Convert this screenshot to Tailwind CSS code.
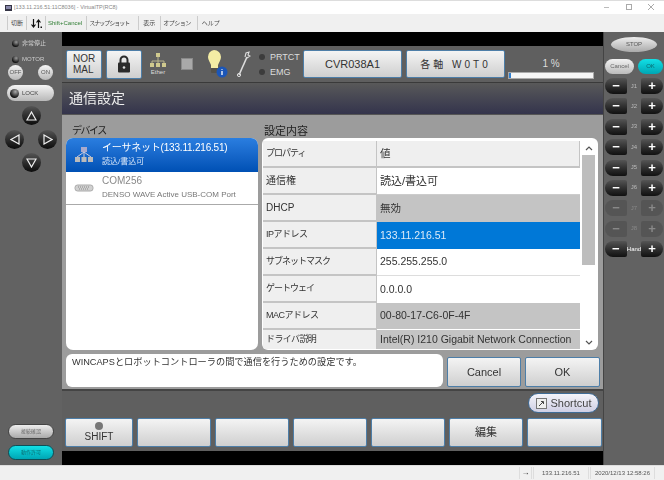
<!DOCTYPE html>
<html lang="ja">
<head>
<meta charset="UTF-8">
<title>VirtualTP</title>
<script src="https://cdn.jsdelivr.net/npm/@tailwindcss/browser@4"></script>
</head>
<body class="w-[664px] h-[480px] overflow-hidden bg-white font-['Liberation_Sans','Noto_Sans_CJK_JP',sans-serif] text-[#333]">
<div class="flex flex-col h-[480px] blur-[0.35px]">

  <!-- title bar -->
  <div class="h-[14px] bg-white flex items-center pl-[5px] border-t border-[#ddd]">
    <svg width="7" height="6" viewBox="0 0 7 6"><rect width="7" height="6" fill="#334"/><rect x="1" y="1" width="5" height="3" fill="#88a"/></svg>
    <span class="ml-[2px] text-[5.5px] text-[#888] whitespace-nowrap">[133.11.216.51:11C8036] - VirtualTP(RC8)</span>
    <div class="ml-auto flex items-center gap-[13px] pr-[8px] text-[#aaa]">
      <svg width="9" height="9" viewBox="0 0 9 9"><path d="M1 4.5h5" stroke="#bbb" fill="none"/></svg>
      <svg width="9" height="9" viewBox="0 0 9 9"><rect x="1.5" y="1.5" width="5" height="5" stroke="#aaa" fill="none"/></svg>
      <svg width="9" height="9" viewBox="0 0 9 9"><path d="M1 1l6 6M7 1l-6 6" stroke="#aaa" fill="none"/></svg>
    </div>
  </div>

  <!-- menu -->
  <div class="h-[18px] bg-[#f0f0f0] flex items-center text-[6px] whitespace-nowrap text-[#444]">
    <span class="w-[4px] h-[14px] ml-[4px] border-r border-[#ccc]"></span>
    <span class="ml-[3px]">切断</span>
    <span class="w-px h-[14px] bg-[#ccc] ml-[3px]"></span>
    <svg class="ml-[4px]" width="11" height="9" viewBox="0 0 11 9"><path d="M2.5 0v8M0.5 5.5l2 2.5 2-2.5M7.5 9V1M5.5 3.5l2-2.5 2 2.5" stroke="#111" stroke-width="1.2" fill="none"/><rect x="9.5" y="7.5" width="1.5" height="1.5" fill="#111"/></svg>
    <span class="w-px h-[14px] bg-[#ccc] ml-[3px]"></span>
    <span class="ml-[2px] text-[#2e7d32]">Shift+Cancel</span>
    <span class="w-px h-[14px] bg-[#ccc] ml-[4px]"></span>
    <span class="ml-[2px] tracking-[-1px]">スナップショット</span>
    <span class="w-px h-[14px] bg-[#ccc] ml-[9px]"></span>
    <span class="ml-[4px]">表示</span>
    <span class="w-px h-[14px] bg-[#ccc] ml-[5px]"></span>
    <span class="ml-[2px] tracking-[-0.5px]">オプション</span>
    <span class="w-px h-[14px] bg-[#ccc] ml-[6px]"></span>
    <span class="ml-[4px]">ヘルプ</span>
  </div>

  <div class="flex h-[433px]">
    <!-- left panel -->
    <div class="w-[62px] bg-[#626262] flex flex-col text-[6px] text-[#ccc]">
      <div class="flex items-center mt-[8px] ml-[12px] gap-[3px] h-[7px]"><span class="w-[7px] h-[7px] rounded-full bg-[radial-gradient(circle_at_60%_30%,#999,#111_70%)]"></span>非常停止</div>
      <div class="flex items-center mt-[9px] ml-[12px] gap-[3px] h-[7px]"><span class="w-[7px] h-[7px] rounded-full bg-[radial-gradient(circle_at_60%_30%,#999,#111_70%)]"></span>MOTOR</div>
      <div class="flex justify-between ml-[8px] mr-[9px] mt-[2px] text-[#555]">
        <span class="w-[15px] h-[15px] rounded-full bg-gradient-to-b from-[#f5f5f5] to-[#b8b8b8] flex items-center justify-center">OFF</span>
        <span class="w-[15px] h-[15px] rounded-full bg-gradient-to-b from-[#f5f5f5] to-[#b8b8b8] flex items-center justify-center">ON</span>
      </div>
      <div class="ml-[7px] w-[47px] h-[16px] mt-[5px] rounded-[8px] bg-gradient-to-b from-[#f5f5f5] to-[#b8b8b8] flex items-center pl-[3px] gap-[3px] text-[#444]"><span class="w-[9px] h-[9px] rounded-full bg-[radial-gradient(circle_at_60%_30%,#aaa,#111_70%)]"></span>LOCK</div>

      <div class="grid grid-cols-[17px_16px_19px] grid-rows-[24px_23px_19px] ml-[5px] mt-[5px]">
        <span></span>
        <span class="w-[19px] h-[19px] rounded-full bg-gradient-to-b from-[#555] to-[#0c0c0c] flex items-center justify-center"><svg width="11" height="10" viewBox="0 0 11 10"><path d="M5.5 1L10 9H1Z" fill="none" stroke="#eee" stroke-width="1.2"/></svg></span>
        <span></span>
        <span class="w-[19px] h-[19px] rounded-full bg-gradient-to-b from-[#555] to-[#0c0c0c] flex items-center justify-center"><svg width="10" height="11" viewBox="0 0 10 11"><path d="M1 5.5L9 1V10Z" fill="none" stroke="#eee" stroke-width="1.2"/></svg></span>
        <span></span>
        <span class="w-[19px] h-[19px] rounded-full bg-gradient-to-b from-[#555] to-[#0c0c0c] flex items-center justify-center"><svg width="10" height="11" viewBox="0 0 10 11"><path d="M9 5.5L1 1V10Z" fill="none" stroke="#eee" stroke-width="1.2"/></svg></span>
        <span></span>
        <span class="w-[19px] h-[19px] rounded-full bg-gradient-to-b from-[#555] to-[#0c0c0c] flex items-center justify-center"><svg width="11" height="10" viewBox="0 0 11 10"><path d="M5.5 9L10 1H1Z" fill="none" stroke="#eee" stroke-width="1.2"/></svg></span>
        <span></span>
      </div>

      <div class="mt-auto ml-[8px] w-[46px] h-[15px] rounded-[8px] bg-gradient-to-b from-[#eee] to-[#aaa] border border-[#444] flex items-center justify-center text-[#666] text-[5px]">接続確認</div>
      <div class="ml-[8px] w-[46px] h-[15px] mt-[6px] mb-[5px] rounded-[8px] bg-gradient-to-b from-[#12e0e6] to-[#00a6b4] border border-[#0b5058] flex items-center justify-center text-[#0a6a70] text-[5px]">動作許可</div>
    </div>

    <!-- center -->
    <div class="w-[541px] flex flex-col">
      <div class="h-[14px] bg-black"></div>

      <!-- top status bar -->
      <div class="h-[37px] bg-[#5f5f5f] border-b border-[#3a3a3a] flex items-center pl-[4px] relative">
        <div class="w-[36px] h-[29px] rounded-[2px] border border-[#4d7ea8] bg-gradient-to-b from-[#f4f4f4] to-[#cfcfcf] text-[10px] leading-[11px] text-[#333] pl-[6px] flex flex-col justify-center"><span>NOR</span><span>MAL</span></div>
        <div class="ml-[4px] w-[36px] h-[29px] rounded-[2px] border border-[#4d7ea8] bg-gradient-to-b from-[#f4f4f4] to-[#cfcfcf] flex items-center justify-center">
          <svg width="14" height="18" viewBox="0 0 14 18"><path d="M3.5 8V5a3.5 3.5 0 0 1 7 0v3" fill="none" stroke="#2b2b2b" stroke-width="2"/><rect x="1" y="7.5" width="12" height="10" rx="1" fill="#2b2b2b"/><circle cx="7" cy="12.5" r="1.3" fill="#ddd"/></svg>
        </div>
        <div class="ml-[7px] w-[18px] flex flex-col items-center text-[6px] leading-[6px] text-[#ddd]">
          <svg width="18" height="15" viewBox="0 0 18 15"><path d="M9 3v5M3 11V8h12v3M9 8v3" stroke="#b9b58f" fill="none"/><rect x="7" y="0" width="4" height="4" fill="#cfc98e"/><rect x="1" y="10" width="4" height="4" fill="#cfc98e"/><rect x="7" y="10" width="4" height="4" fill="#cfc98e"/><rect x="13" y="10" width="4" height="4" fill="#cfc98e"/></svg>
          <span class="mt-px">Ether</span>
        </div>
        <div class="ml-[14px] w-[12px] h-[12px] bg-[#a9a9a9] border border-[#8a8a8a]"></div>
        <svg class="ml-[14px]" width="22" height="30" viewBox="0 0 22 30"><path d="M7 1a7 7 0 0 1 7 7c0 3-2 5-3 8v3H4v-3c-1-3-3-5-3-8a7 7 0 0 1 6-7Z" fill="#f4eda4"/><rect x="4" y="19" width="7" height="5" rx="1" fill="#55524a"/><circle cx="15" cy="23" r="5.5" fill="#1b56b8"/><path d="M15 20v.8M15 22v4" stroke="#fff" stroke-width="1.3"/></svg>
        <svg class="ml-[7px]" width="15" height="28" viewBox="0 0 15 28"><path d="M3 25L11 7" stroke="#ddd" stroke-width="1.6" fill="none"/><path d="M9 7l1-4 3-1-1 3 2 1-3 2" stroke="#ddd" stroke-width="1.1" fill="none"/><circle cx="3" cy="25" r="1.6" fill="none" stroke="#ddd"/></svg>
        <div class="ml-[8px] w-[38px] flex flex-col gap-[5px] text-[9px] leading-[10px] text-[#ddd] whitespace-nowrap">
          <div class="flex items-center gap-[5px]"><span class="shrink-0 w-[6px] h-[6px] rounded-full bg-[#3c3c3c]"></span>PRTCT</div>
          <div class="flex items-center gap-[5px]"><span class="shrink-0 w-[6px] h-[6px] rounded-full bg-[#3c3c3c]"></span>EMG</div>
        </div>
        <div class="ml-[6px] w-[99px] h-[28px] rounded-[2px] border border-[#4d7ea8] bg-gradient-to-b from-[#f4f4f4] to-[#cfcfcf] flex items-center justify-center text-[11px] text-[#333]">CVR038A1</div>
        <div class="ml-[4px] w-[99px] h-[28px] rounded-[2px] border border-[#4d7ea8] bg-gradient-to-b from-[#f4f4f4] to-[#cfcfcf] flex items-center justify-center text-[10px] text-[#333] tracking-[3px] whitespace-nowrap">各軸 W0T0</div>
        <div class="ml-[3px] w-[86px] flex flex-col items-center text-[10px] leading-[12px] text-[#ddd] pt-[8px]">
          <span class="mb-[2px]">1 %</span>
          <div class="w-[86px] h-[7px] bg-[#f5f5f5] border border-[#aaa]"><div class="h-full bg-[#2f7fd0]" style="width:2%"></div></div>
        </div>
      </div>

      <!-- heading -->
      <div class="h-[32px] bg-gradient-to-b from-[#595959] to-[#34344c] flex items-center pl-[7px] text-[14px] text-[#eee] border-b border-[#555]">通信設定</div>

      <!-- content -->
      <div class="h-[276px] bg-[#9c9c9c] flex flex-col pl-[4px] border-b-2 border-[#444]">
        <div class="flex gap-[4px]">
          <div class="w-[192px]">
            <div class="h-[23px] pl-[6px] pt-[9px] text-[10px] tracking-[-1.5px] leading-[14px] text-[#222]">デバイス</div>
            <div class="h-[212px] bg-white rounded-[7px] overflow-hidden">
              <div class="h-[34px] bg-gradient-to-b from-[#2a7ee0] to-[#0050b4] flex items-center">
                <svg class="ml-[8px]" width="20" height="18" viewBox="0 0 20 18"><rect x="7" y="1" width="6" height="5" fill="#aac"/><rect x="1" y="11" width="5" height="5" fill="#bbb"/><rect x="7.5" y="11" width="5" height="5" fill="#bbb"/><rect x="14" y="11" width="5" height="5" fill="#bbb"/><path d="M10 6L3 11M10 6v5M10 6l7 5" stroke="#ccd" fill="none"/></svg>
                <div class="ml-[8px] text-white leading-[14px]"><div class="text-[10px] tracking-[-0.2px]">イーサネット(133.11.216.51)</div><div class="text-[8px] text-[#d8e6f8]">読込/書込可</div></div>
              </div>
              <div class="h-[33px] border-b border-[#aaa] flex items-center">
                <svg class="ml-[8px]" width="20" height="8" viewBox="0 0 20 8"><rect x="1" y="1" width="18" height="6" rx="2.5" fill="#d0d0d0" stroke="#aaa"/><path d="M4 3h12M5 5h10" stroke="#888" stroke-dasharray="1 1"/></svg>
                <div class="ml-[8px] leading-[14px] text-[#888] whitespace-nowrap"><div class="text-[10px]">COM256</div><div class="text-[8px] text-[#777]">DENSO WAVE Active USB-COM Port</div></div>
              </div>
            </div>
          </div>
          <div class="w-[336px]">
            <div class="h-[23px] pl-[2px] pt-[9px] text-[11px] leading-[14px] text-[#222]">設定内容</div>
            <div class="h-[212px] bg-white rounded-[6px] overflow-hidden flex pl-[1px] pt-[3px] text-[10.5px] text-[#333]">
              <div class="w-[317px] grid grid-cols-[114px_203px] auto-rows-[27px] content-start">
                <div class="bg-[#efefef] border-r border-b-2 border-[#c4c4c4] pl-[3px] flex items-center text-[9px] tracking-[-1px]">プロパティ</div>
                <div class="bg-[#efefef] border-b-2 border-r border-[#c4c4c4] pl-[3px] flex items-center">値</div>
                <div class="bg-[#efefef] border-r border-b-2 border-[#c4c4c4] pl-[3px] flex items-center text-[10px]">通信権</div>
                <div class="bg-white pl-[3px] flex items-center border-b border-[#ccc] text-[11px]">読込/書込可</div>
                <div class="bg-[#efefef] border-r border-b-2 border-[#c4c4c4] pl-[3px] flex items-center text-[10px]">DHCP</div>
                <div class="bg-[#c4c4c4] pl-[3px] flex items-center">無効</div>
                <div class="bg-[#efefef] border-r border-b-2 border-[#c4c4c4] pl-[3px] flex items-center text-[9px] tracking-[-0.5px]">IPアドレス</div>
                <div class="bg-[#0078d7] text-[#dbeaf8] pl-[3px] flex items-center">133.11.216.51</div>
                <div class="bg-[#efefef] border-r border-b-2 border-[#c4c4c4] pl-[3px] flex items-center text-[9px] tracking-[-1px]">サブネットマスク</div>
                <div class="bg-white pl-[3px] flex items-center border-b border-[#ddd]">255.255.255.0</div>
                <div class="bg-[#efefef] border-r border-b-2 border-[#c4c4c4] pl-[3px] flex items-center text-[9px] tracking-[-1px]">ゲートウェイ</div>
                <div class="bg-white pl-[3px] flex items-center">0.0.0.0</div>
                <div class="bg-[#efefef] border-r border-b-2 border-[#c4c4c4] pl-[3px] flex items-center text-[9px] tracking-[-0.5px]">MACアドレス</div>
                <div class="bg-[#c4c4c4] pl-[3px] flex items-center border-b border-white">00-80-17-C6-0F-4F</div>
                <div class="bg-[#efefef] border-r border-[#c4c4c4] pl-[3px] flex items-start pt-[3px] h-[19px] text-[9px] tracking-[-0.6px]">ドライバ説明</div>
                <div class="bg-[#c4c4c4] pl-[3px] flex items-start pt-[2px] h-[19px] whitespace-nowrap overflow-hidden">Intel(R) I210 Gigabit Network Connection</div>
              </div>
              <div class="w-[15px] ml-[1px] flex flex-col items-center">
                <svg class="my-[4px]" width="8" height="6" viewBox="0 0 8 6"><path d="M1 5l3-3 3 3" stroke="#555" fill="none" stroke-width="1.2"/></svg>
                <div class="w-[13px] h-[110px] bg-[#bdbdbd]"></div>
                <svg class="mt-auto mb-[4px]" width="8" height="6" viewBox="0 0 8 6"><path d="M1 1l3 3 3-3" stroke="#555" fill="none" stroke-width="1.2"/></svg>
              </div>
            </div>
          </div>
        </div>
        <div class="flex mt-[4px] items-end">
          <div class="w-[377px] h-[33px] bg-white rounded-[6px] pl-[6px] pt-[1px] text-[9.2px] leading-[14px] text-[#333] whitespace-nowrap">WINCAPSとロボットコントローラの間で通信を行うための設定です。</div>
          <div class="ml-[4px] w-[74px] h-[30px] rounded-[2px] border border-[#4d7ea8] bg-gradient-to-b from-[#f4f4f4] to-[#cfcfcf] flex items-center justify-center text-[11px]">Cancel</div>
          <div class="ml-[4px] w-[75px] h-[30px] rounded-[2px] border border-[#4d7ea8] bg-gradient-to-b from-[#f4f4f4] to-[#cfcfcf] flex items-center justify-center text-[11px]">OK</div>
        </div>
      </div>

      <!-- lower buttons -->
      <div class="flex-1 bg-[#5f5f5f] flex flex-col">
        <div class="flex justify-end pr-[4px] pt-[2px]">
          <div class="w-[71px] h-[20px] rounded-[10px] bg-gradient-to-b from-[#f4f4fa] to-[#cfcfe4] border border-[#3f6c96] flex items-center justify-center gap-[4px] text-[11px] text-[#444]">
            <svg width="11" height="11" viewBox="0 0 11 11"><rect x=".5" y=".5" width="10" height="10" fill="#eee" stroke="#777"/><path d="M3 8l4-4M5 3.5h2.5V6" stroke="#444" fill="none"/></svg>Shortcut
          </div>
        </div>
        <div class="flex pl-[3px] mt-[5px] gap-[4px] h-[29px] text-[11px] text-[#333]">
          <div class="w-[68px] rounded-[2px] border border-[#4d7ea8] bg-gradient-to-b from-[#f4f4f4] to-[#cfcfcf] flex flex-col items-center justify-center leading-[12px]"><span class="w-[8px] h-[8px] rounded-full bg-[#777] mb-[1px]"></span><span class="text-[10px]">SHIFT</span></div>
          <div class="w-[74px] rounded-[2px] border border-[#4d7ea8] bg-gradient-to-b from-[#f4f4f4] to-[#cfcfcf]"></div>
          <div class="w-[74px] rounded-[2px] border border-[#4d7ea8] bg-gradient-to-b from-[#f4f4f4] to-[#cfcfcf]"></div>
          <div class="w-[74px] rounded-[2px] border border-[#4d7ea8] bg-gradient-to-b from-[#f4f4f4] to-[#cfcfcf]"></div>
          <div class="w-[74px] rounded-[2px] border border-[#4d7ea8] bg-gradient-to-b from-[#f4f4f4] to-[#cfcfcf]"></div>
          <div class="w-[74px] rounded-[2px] border border-[#4d7ea8] bg-gradient-to-b from-[#f4f4f4] to-[#cfcfcf] flex items-center justify-center">編集</div>
          <div class="w-[75px] rounded-[2px] border border-[#4d7ea8] bg-gradient-to-b from-[#f4f4f4] to-[#cfcfcf]"></div>
        </div>
      </div>
      <div class="h-[14px] bg-black"></div>
    </div>

    <!-- right panel -->
    <div class="w-[61px] bg-[#626262] border-l border-[#444] flex flex-col text-[6px] text-[#bbb]">
      <div class="mx-auto mt-[5px] w-[46px] h-[15px] rounded-[50%] bg-gradient-to-b from-[#eee] to-[#aaa] flex items-center justify-center text-[#555] text-[6px]">STOP</div>
      <div class="flex justify-between px-[1px] mt-[7px] mb-[4px] text-[6px]">
        <span class="w-[29px] h-[15px] rounded-[8px] bg-gradient-to-b from-[#f2f2f2] to-[#bbb] flex items-center justify-center text-[#666]">Cancel</span>
        <span class="w-[25px] h-[15px] rounded-[8px] bg-gradient-to-b from-[#12e0e6] to-[#00a6b4] flex items-center justify-center text-[#0a6a70]">OK</span>
      </div>
      <div class="flex flex-col gap-[4.4px] pl-[1px] pr-[1px]">
        <div class="flex items-center justify-between h-[16px]"><span class="w-[22px] h-[16px] rounded-l-[8px] rounded-r-[2px] bg-gradient-to-b from-[#555] to-[#111] text-white text-[13px] font-bold leading-[16px] text-center">−</span>J1<span class="w-[22px] h-[16px] rounded-r-[8px] rounded-l-[2px] bg-gradient-to-b from-[#555] to-[#111] text-white text-[13px] font-bold leading-[16px] text-center">+</span></div>
        <div class="flex items-center justify-between h-[16px]"><span class="w-[22px] h-[16px] rounded-l-[8px] rounded-r-[2px] bg-gradient-to-b from-[#555] to-[#111] text-white text-[13px] font-bold leading-[16px] text-center">−</span>J2<span class="w-[22px] h-[16px] rounded-r-[8px] rounded-l-[2px] bg-gradient-to-b from-[#555] to-[#111] text-white text-[13px] font-bold leading-[16px] text-center">+</span></div>
        <div class="flex items-center justify-between h-[16px]"><span class="w-[22px] h-[16px] rounded-l-[8px] rounded-r-[2px] bg-gradient-to-b from-[#555] to-[#111] text-white text-[13px] font-bold leading-[16px] text-center">−</span>J3<span class="w-[22px] h-[16px] rounded-r-[8px] rounded-l-[2px] bg-gradient-to-b from-[#555] to-[#111] text-white text-[13px] font-bold leading-[16px] text-center">+</span></div>
        <div class="flex items-center justify-between h-[16px]"><span class="w-[22px] h-[16px] rounded-l-[8px] rounded-r-[2px] bg-gradient-to-b from-[#555] to-[#111] text-white text-[13px] font-bold leading-[16px] text-center">−</span>J4<span class="w-[22px] h-[16px] rounded-r-[8px] rounded-l-[2px] bg-gradient-to-b from-[#555] to-[#111] text-white text-[13px] font-bold leading-[16px] text-center">+</span></div>
        <div class="flex items-center justify-between h-[16px]"><span class="w-[22px] h-[16px] rounded-l-[8px] rounded-r-[2px] bg-gradient-to-b from-[#555] to-[#111] text-white text-[13px] font-bold leading-[16px] text-center">−</span>J5<span class="w-[22px] h-[16px] rounded-r-[8px] rounded-l-[2px] bg-gradient-to-b from-[#555] to-[#111] text-white text-[13px] font-bold leading-[16px] text-center">+</span></div>
        <div class="flex items-center justify-between h-[16px]"><span class="w-[22px] h-[16px] rounded-l-[8px] rounded-r-[2px] bg-gradient-to-b from-[#555] to-[#111] text-white text-[13px] font-bold leading-[16px] text-center">−</span>J6<span class="w-[22px] h-[16px] rounded-r-[8px] rounded-l-[2px] bg-gradient-to-b from-[#555] to-[#111] text-white text-[13px] font-bold leading-[16px] text-center">+</span></div>
        <div class="flex items-center justify-between h-[16px] text-[#888]"><span class="w-[22px] h-[16px] rounded-l-[8px] rounded-r-[2px] bg-[#555] text-[#888] text-[13px] font-bold leading-[16px] text-center">−</span>J7<span class="w-[22px] h-[16px] rounded-r-[8px] rounded-l-[2px] bg-[#555] text-[#888] text-[13px] font-bold leading-[16px] text-center">+</span></div>
        <div class="flex items-center justify-between h-[16px] text-[#888]"><span class="w-[22px] h-[16px] rounded-l-[8px] rounded-r-[2px] bg-[#555] text-[#888] text-[13px] font-bold leading-[16px] text-center">−</span>J8<span class="w-[22px] h-[16px] rounded-r-[8px] rounded-l-[2px] bg-[#555] text-[#888] text-[13px] font-bold leading-[16px] text-center">+</span></div>
        <div class="flex items-center justify-between h-[16px] text-white"><span class="w-[22px] h-[16px] rounded-l-[8px] rounded-r-[2px] bg-gradient-to-b from-[#555] to-[#111] text-white text-[13px] font-bold leading-[16px] text-center">−</span>Hand<span class="w-[22px] h-[16px] rounded-r-[8px] rounded-l-[2px] bg-gradient-to-b from-[#555] to-[#111] text-white text-[13px] font-bold leading-[16px] text-center">+</span></div>
      </div>
    </div>
  </div>

  <!-- status bar -->
  <div class="h-[15px] bg-[#f0f0f0] border-t border-[#ddd] flex items-center justify-end text-[6px] text-[#555] whitespace-nowrap">
    <span class="w-[13px] h-[12px] border-x border-[#ddd] flex items-center justify-center text-[8px] leading-none text-[#333]">→</span>
    <span class="w-[56px] ml-[1px] h-[12px] border-x border-[#ddd] flex items-center justify-center">133.11.216.51</span>
    <span class="w-[65px] ml-px h-[12px] border-x border-[#ddd] flex items-center justify-center">2020/12/13 12:58:26</span>
    <span class="w-[9px]"></span>
  </div>
</div>
</body>
</html>
